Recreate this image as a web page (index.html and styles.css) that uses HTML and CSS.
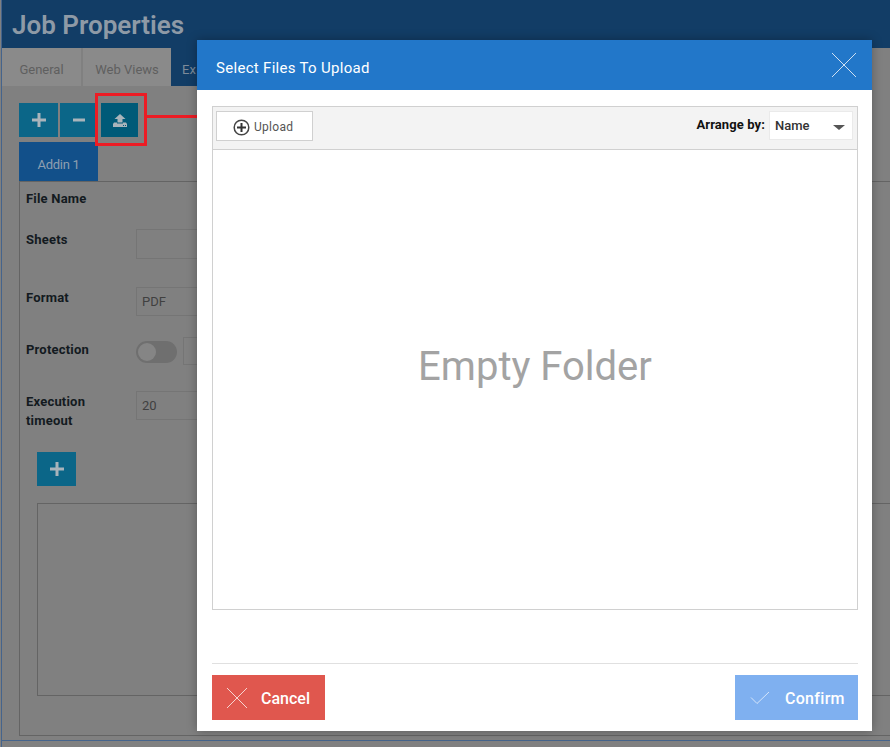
FILE: index.html
```html
<!DOCTYPE html>
<html lang="en">
<head>
  <meta charset="UTF-8">
  <meta name="viewport" content="width=device-width, initial-scale=1.0">
  <title>Job Properties</title>
  <link rel="stylesheet" href="styles.css">
</head>
<body>

  <div class="page">
    <header class="page-head">
      <h1>Job Properties</h1>
    </header>
    <nav class="tabs">
      <a class="tab">General</a>
      <a class="tab tab-wide">Web Views</a>
      <a class="tab tab-active">Ex</a>
    </nav>

    <div class="content">
      <div class="tools">
        <button class="tool">
          <svg width="14" height="14" viewBox="0 0 14 14"><path d="M5.500 0h3v5.500H14v3H8.500V14h-3V8.500H0v-3h5.500z" fill="#a9b4bb"/></svg>
        </button>
        <button class="tool tool-minus">
          <svg width="12" height="4" viewBox="0 0 12 4"><path d="M0 0.500h12v3H0z" fill="#a9b4bb"/></svg>
        </button>
        <button class="tool tool-upload">
          <svg width="14" height="13" viewBox="0 0 14 13"><path d="M7 0l5.500 5H9.500v3.500h-5V5H1.500zM1 8.500h3V9.500h6V8.500h3l1 1.500v3H0v-3z" fill="#a9b4bb"/><path d="M10 11h1v1h-1zM12 11h1v1h-1z" fill="#005a78"/></svg>
        </button>
      </div>

      <div class="addin-tab">Addin 1</div>
      <div class="panel">
        <div class="row row-file"><span class="label">File Name</span></div>
        <div class="row row-sheets"><span class="label">Sheets</span><div class="field field-tall"></div></div>
        <div class="row row-format"><span class="label">Format</span><div class="field">PDF</div></div>
        <div class="row row-protect">
          <span class="label">Protection</span>
          <div class="toggle"><i></i></div>
          <div class="field field-side"></div>
        </div>
        <div class="row row-timeout"><span class="label">Execution<br>timeout</span><div class="field">20</div></div>
        <button class="tool tool-add">
          <svg width="14" height="14" viewBox="0 0 14 14"><path d="M5.500 0h3v5.500H14v3H8.500V14h-3V8.500H0v-3h5.500z" fill="#a9b4bb"/></svg>
        </button>
        <div class="textbox"></div>
      </div>
    </div>
    <div class="page-foot"></div>
  </div>

  <!-- callout from the upload button to the dialog -->
  <div class="callout-box"></div>
  <div class="callout-line"></div>

  <div class="modal">
    <div class="modal-head">
      <span class="modal-title">Select Files To Upload</span>
      <svg class="modal-close" width="26" height="26" viewBox="0 0 26 26"><path d="M1 1l24 24M25 1L1 25" stroke="#cfe0f2" stroke-width="1" fill="none"/></svg>
    </div>
    <div class="modal-body">
      <div class="browser">
        <div class="browser-bar">
          <button class="upload-btn">
            <svg width="17" height="17" viewBox="0 0 17 17"><circle cx="8.500" cy="8.500" r="7.300" fill="none" stroke="#444" stroke-width="1.500"/><path d="M7.500 4h2v3.500H13v2H9.500V13h-2V9.500H4v-2h3.500z" fill="#333"/></svg>
            <span>Upload</span>
          </button>
          <div class="arrange">
            <span class="arrange-label">Arrange by:</span>
            <div class="arrange-select"><span>Name</span><i></i></div>
          </div>
        </div>
        <div class="browser-empty">Empty Folder</div>
      </div>
    </div>
    <div class="modal-foot">
      <button class="action action-cancel">
        <svg width="22" height="22" viewBox="0 0 22 22"><path d="M1 1l20 20M21 1L1 21" stroke="#f6d5d1" stroke-width="1" fill="none"/></svg>
        <span>Cancel</span>
      </button>
      <button class="action action-confirm">
        <svg width="20" height="14" viewBox="0 0 20 14"><path d="M1 6.500l6 6L19 1" stroke="#d5e5fa" stroke-width="1" fill="none"/></svg>
        <span>Confirm</span>
      </button>
    </div>
  </div>

</body>
</html>
```

FILE: styles.css
```css
* {
  box-sizing: border-box;
}
html, body {
  margin: 0;
  height: 747px;
  overflow: hidden;
}
body {
  font-family: Roboto, "Liberation Sans", sans-serif;
  background: #808080;
  position: relative;
}
button {
  font-family: inherit;
  border: none;
  padding: 0;
}

/* page behind the dialog */
.page {
  height: 747px;
  margin-left: 1px;
  border-left: 1px solid #45648c;
  display: flex;
  flex-direction: column;
}
.page-head {
  height: 48px;
  background: #123d66;
  padding-left: 10px;
  flex: none;
}
.page-head h1 {
  margin: 0;
  font-size: 26px;
  line-height: 50px;
  font-weight: 600;
  color: #8e9aa6;
}
.tabs {
  display: flex;
  height: 38px;
  flex: none;
}
.tab {
  width: 79px;
  margin-right: 2px;
  background: #8a8a8a;
  color: #5f5f5f;
  font-size: 13px;
  line-height: 43px;
  text-align: center;
}
.tab-wide {
  width: 88px;
  margin-right: 0;
}
.tab-active {
  width: 100px;
  padding-left: 11px;
  text-align: left;
  background: #123d66;
  color: #7d8b99;
}
.content {
  flex: 1;
  padding: 17px 0 0 17px;
  display: flex;
  flex-direction: column;
}
.tools {
  display: flex;
  gap: 2px;
  height: 34px;
  margin-bottom: 5px;
}
.tool {
  width: 39px;
  height: 34px;
  background: #0b6688;
  display: flex;
  align-items: center;
  justify-content: center;
}
.tool-minus {
  width: 37px;
}
.tool-upload {
  width: 37px;
  margin-left: 2px;
  background: #005a78;
}
.addin-tab {
  width: 79px;
  height: 39px;
  background: #12508a;
  color: #8e9fb0;
  font-size: 13px;
  letter-spacing: -0.3px;
  line-height: 46px;
  text-align: center;
}
.panel {
  height: 555px;
  border: 1px solid #646464;
  border-right: none;
  padding-left: 6px;
}
.row {
  display: flex;
  align-items: flex-start;
}
.label {
  width: 110px;
  flex: none;
  font-size: 13px;
  font-weight: 700;
  letter-spacing: 0.2px;
  line-height: 19px;
  color: #131a20;
}
.field {
  width: 200px;
  height: 29px;
  border: 1px solid #757575;
  font-size: 13px;
  line-height: 27px;
  padding-left: 5px;
  color: #404040;
}
.row-file {
  height: 47px;
  padding-top: 7px;
}
.row-sheets {
  height: 58px;
}
.row-sheets .label,
.row-format .label,
.row-timeout .label {
  padding-top: 1px;
}
.field-tall {
  height: 30px;
}
.row-format {
  height: 53px;
}
.row-protect {
  height: 51px;
}
.toggle {
  width: 41px;
  height: 22px;
  margin-top: 1px;
  border-radius: 11px;
  background: #6f6f6f;
  padding: 2px;
}
.toggle i {
  display: block;
  width: 18px;
  height: 18px;
  border-radius: 50%;
  background: #858585;
}
.field-side {
  margin: -3px 0 0 6px;
  height: 28px;
}
.row-timeout {
  height: 61px;
}
.tool-add {
  margin-left: 11px;
}
.textbox {
  height: 193px;
  margin: 17px 0 0 11px;
  border: 1px solid #646464;
  border-right: none;
}
.page-foot {
  height: 7px;
  border-top: 1px solid #45648c;
  flex: none;
}

/* red callout */
.callout-box {
  position: absolute;
  left: 95px;
  top: 93px;
  width: 52px;
  height: 53px;
  border: 3px solid #ec1c24;
}
.callout-line {
  position: absolute;
  left: 147px;
  top: 115px;
  width: 60px;
  height: 3px;
  background: #ec1c24;
}

/* dialog */
.modal {
  position: absolute;
  left: 197px;
  top: 40px;
  width: 675px;
  height: 691px;
  background: #fff;
  box-shadow: 0 0 10px rgba(0, 0, 0, 0.3);
  display: flex;
  flex-direction: column;
}
.modal-head {
  height: 50px;
  flex: none;
  background: #2277c9;
  color: #fff;
  font-size: 15px;
  padding: 0 15px 0 19px;
  display: flex;
  align-items: center;
  justify-content: space-between;
}
.modal-title {
  letter-spacing: 0.3px;
  padding-top: 6px;
}
.modal-body {
  height: 573px;
  flex: none;
  padding: 16px 14px 0 15px;
}
.browser {
  height: 504px;
  border: 1px solid #d0d0d0;
  display: flex;
  flex-direction: column;
}
.browser-bar {
  height: 43px;
  flex: none;
  background: #f3f3f3;
  border-bottom: 1px solid #d0d0d0;
  padding: 4px 4px 0 3px;
  display: flex;
  justify-content: space-between;
  align-items: flex-start;
}
.upload-btn {
  width: 97px;
  height: 30px;
  background: #fff;
  border: 1px solid #d0d0d0;
  color: #555;
  font-size: 12px;
  letter-spacing: 0.3px;
  display: flex;
  align-items: center;
  padding-left: 16px;
  gap: 4px;
}
.upload-btn svg {
  margin-top: 3px;
}
.upload-btn span {
  padding-top: 1px;
}
.arrange {
  display: flex;
}
.arrange-label {
  font-size: 13px;
  font-weight: 700;
  letter-spacing: 0.1px;
  color: #111;
  padding: 6px 4px 0 0;
}
.arrange-select {
  width: 84px;
  height: 29px;
  background: #fff;
  border: 1px solid #eaeaea;
  color: #333;
  font-size: 13px;
  font-weight: 500;
  padding: 0 7px 0 5px;
  line-height: 28px;
  display: flex;
  justify-content: space-between;
  align-items: center;
}
.arrange-select i {
  width: 0;
  height: 0;
  margin-top: 3px;
  border-left: 6px solid transparent;
  border-right: 6px solid transparent;
  border-top: 5px solid #555;
}
.browser-empty {
  flex: 1;
  display: flex;
  align-items: center;
  justify-content: center;
  padding: 0 0 27px 0;
  font-size: 40px;
  color: #a3a3a3;
}
.modal-foot {
  margin: 0 14px 0 15px;
  height: 68px;
  border-top: 1px solid #e0e0e0;
  padding-top: 11px;
  display: flex;
  justify-content: space-between;
}
.action {
  height: 45px;
  display: flex;
  align-items: center;
  color: #fff;
  font-size: 16px;
  font-weight: 500;
}
.action span {
  padding-top: 2px;
}
.action-cancel {
  width: 113px;
  background: #e0574e;
  padding-left: 14px;
  gap: 13px;
}
.action-confirm {
  width: 123px;
  background: #7fb0f0;
  padding-left: 15px;
  gap: 15px;
  letter-spacing: 0.3px;
}
```
